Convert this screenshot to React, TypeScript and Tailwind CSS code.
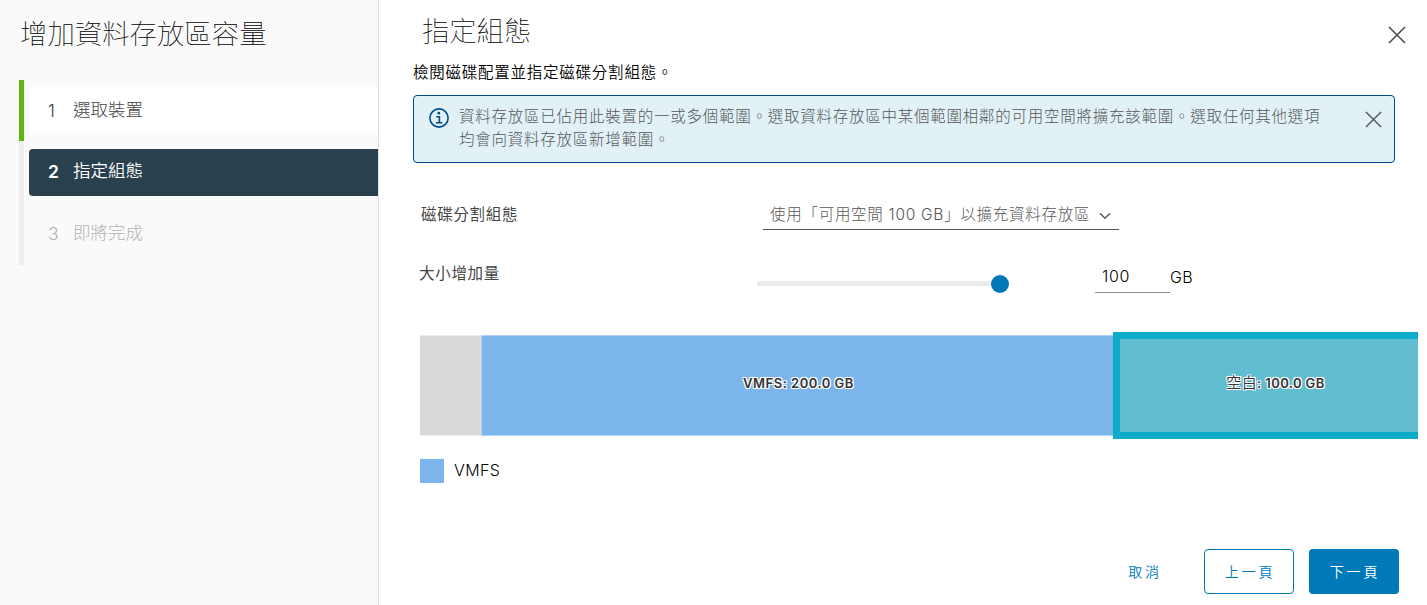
import clsx from 'clsx';

const steps = [
  { number: 1, title: '選取裝置', state: 'done' },
  { number: 2, title: '指定組態', state: 'active' },
  { number: 3, title: '即將完成', state: 'disabled' },
];

function CloseIcon({ className }: { className?: string }) {
  return (
    <svg viewBox="0 0 18 18" className={className} fill="none" stroke="currentColor">
      <path d="M1 1 17 17M17 1 1 17" strokeWidth="1.5" />
    </svg>
  );
}

function InfoIcon() {
  return (
    <svg viewBox="0 0 20 20" className="size-5 shrink-0 text-[#004b8d]" fill="none" stroke="currentColor">
      <circle cx="10" cy="10" r="9.1" strokeWidth="1.6" />
      <circle cx="9.8" cy="5.2" r="1.4" fill="currentColor" stroke="none" />
      <path d="M7.3 8.7h3.1v6M6.9 14.8h6.4" strokeWidth="1.6" />
    </svg>
  );
}

function Sidebar() {
  return (
    <aside className="flex w-[379px] shrink-0 flex-col border-r border-[#dedede] bg-[#fafafa]">
      <h1 className="mt-[14px] h-10 pl-5 text-[27.4px] leading-10 font-thin text-black">增加資料存放區容量</h1>
      <ol className="mt-[26px] ml-[19px]">
        {steps.map((step) => (
          <li
            key={step.number}
            className={clsx(
              'flex items-center border-l-5 pl-[5px]',
              step.state === 'done' && 'h-[61px] border-[#60b515]',
              step.state !== 'done' && 'h-[62px] border-[#eeeeee]'
            )}
          >
            <button
              className={clsx(
                'flex w-full items-center rounded-l-[4px] text-left text-[17.5px]',
                step.state === 'done' && 'h-12 rounded-r-[4px] bg-white pt-px font-light text-[#454545]',
                step.state === 'active' && 'h-[47px] bg-[#29404e] font-[350] text-white',
                step.state === 'disabled' && 'h-[47px] font-light text-[#b3b3b3]'
              )}
            >
              <span className={clsx('w-[44px] pl-[19px]', step.state === 'active' && 'font-semibold')}>
                {step.number}
              </span>
              <span className="-mt-0.5">{step.title}</span>
            </button>
          </li>
        ))}
      </ol>
    </aside>
  );
}

function Alert() {
  return (
    <div className="mt-[13px] ml-[34px] flex h-[68px] w-[982px] rounded-[4px] border border-[#004b8d] bg-[#e1f1f6] pt-3 pl-[15px] text-[#565656]">
      <InfoIcon />
      <p className="-mt-[3px] ml-[10px] w-[868px] text-[15.5px] leading-[23px] font-light tracking-[0.75px]">
        資料存放區已佔用此裝置的一或多個範圍。選取資料存放區中某個範圍相鄰的可用空間將擴充該範圍。選取任何其他選項
        <br />
        均會向資料存放區新增範圍。
      </p>
      <button className="mt-[3px] ml-auto mr-3 size-[17px]">
        <CloseIcon className="size-[17px]" />
      </button>
    </div>
  );
}

function PartitionBar() {
  return (
    <div className="mt-[42px] ml-[41px] flex h-[101px] w-[998px] items-center text-[13px] font-semibold text-[#333333]">
      <div className="h-full w-[61px] border-y border-[#ececec] bg-[#d9d9d9]" />
      <div className="flex h-full w-[632px] items-center justify-center border-y border-l border-[#b0d2f4] bg-[#7cb5ec] pb-[3px] pl-0.5">
        <span className="tracking-[0.5px] [text-shadow:-1px_-1px_0_#fff,1px_-1px_0_#fff,-1px_1px_0_#fff,1px_1px_0_#fff,0_0_2px_#fff]">
          VMFS: 200.0 GB
        </span>
      </div>
      <div className="flex h-[107px] flex-1 items-center justify-center border-y-[7px] border-l-[7px] border-[#0fabcb] bg-[#61bdd0] pb-[5px] pl-[13px]">
        <span className="tracking-[0.4px] [text-shadow:-1px_-1px_0_#fff,1px_-1px_0_#fff,-1px_1px_0_#fff,1px_1px_0_#fff,0_0_2px_#fff]">
          <span className="text-[15px] font-[350]">空白</span>: 100.0 GB
        </span>
      </div>
    </div>
  );
}

export default function App() {
  return (
    <div
      lang="zh-Hant"
      className="flex h-[605px] w-[1427px] overflow-hidden bg-white font-['Inter','Noto_Sans_CJK_TC',sans-serif]"
    >
      <Sidebar />
      <main className="flex flex-1 flex-col">
        <header className="flex h-[62px] items-center justify-between pr-[21px] pl-[43px]">
          <h2 className="mt-0.5 text-[27.3px] leading-10 font-thin text-black">指定組態</h2>
          <button className="mt-2 size-[18px] text-[#454545]">
            <CloseIcon className="size-[18px]" />
          </button>
        </header>
        <p className="h-5 pl-[34px] text-[15.5px] leading-[22px] font-[350] tracking-[0.76px] text-black">
          檢閱磁碟配置並指定磁碟分割組態。
        </p>
        <Alert />

        <div className="mt-[37px] flex h-[30px] items-start">
          <label className="w-[343px] pl-[42px] text-[15.5px] leading-[30px] tracking-[0.7px] text-[#454545]">
            磁碟分割組態
          </label>
          <button className="ml-[41px] flex h-[30px] w-[356px] items-center border-b border-[#565656] pl-[7px] text-left text-[15.5px] font-light tracking-[0.72px] whitespace-nowrap text-[#565656]">
            <span className="w-[322px]">使用「可用空間 100 GB」以擴充資料存放區</span>
            <svg viewBox="0 0 12 8" className="mt-0.5 ml-[7px] h-2 w-3" fill="none" stroke="currentColor">
              <path d="m1 1.2 5 5 5-5" strokeWidth="1.4" />
            </svg>
          </button>
        </div>

        <div className="mt-[29px] flex h-[34px] items-start">
          <label className="w-[378px] pl-[40px] text-[15.5px] leading-[30px] tracking-[0.7px] text-[#454545]">
            大小增加量
          </label>
          <div className="mt-4 flex h-[18px] w-[252px] items-center">
            <div className="-mt-px h-[5px] flex-1 bg-[#ebebeb]" />
            <div className="size-[18px] rounded-full bg-[#0079b8]" />
          </div>
          <div className="ml-[86px] h-[34px] w-[75px] border-b border-[#8c8c8c] pl-[7px] text-[16px] leading-[34px] font-light tracking-[0.6px] text-black">
            100
          </div>
          <span className="text-[16px] leading-9 font-light tracking-[0.3px] text-black">GB</span>
        </div>

        <PartitionBar />

        <div className="mt-[23px] ml-[41px] flex items-center">
          <div className="size-6 bg-[#7cb5ec]" />
          <span className="-mt-0.5 ml-[10px] text-[16px] font-light tracking-[0.4px] text-black">VMFS</span>
        </div>

        <footer className="mt-auto mb-[11px] flex h-[45px] justify-end pr-7 text-[14px] font-[350] tracking-[2.8px]">
          <button className="mr-[15px] w-[90px] pl-0.5 text-[#0079b8]">取消</button>
          <button className="mr-[15px] w-[90px] rounded-[4px] border border-[#0079b8] pl-0.5 text-[#0079b8]">
            上一頁
          </button>
          <button className="w-[90px] rounded-[4px] bg-[#0079b8] pl-0.5 text-white">下一頁</button>
        </footer>
      </main>
    </div>
  );
}
